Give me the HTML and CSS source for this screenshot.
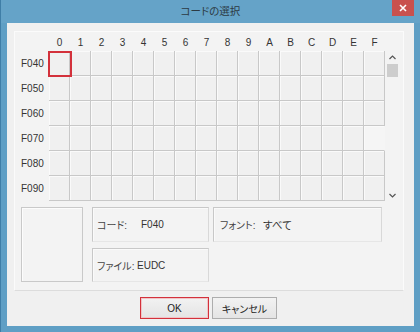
FILE: index.html
```html
<!DOCTYPE html>
<html lang="ja">
  <head>
    <meta charset="UTF-8" />
    <title>コードの選択</title>
    <link rel="stylesheet" href="styles.css">
  </head>
  <body>
    <div class="window">
      <!-- title bar -->
      <div class="titlebar">
        <div></div>
        <div class="title">コードの選択</div>
        <div class="btn-close">
          <svg width="8" height="8" viewBox="0 0 8 8"><path d="M1 1L7 7M7 1L1 7" stroke="#fff" stroke-width="1.6" /></svg>
        </div>
      </div>

      <div class="client">
        <div class="panel">
          <!-- code chart -->
          <div class="chart">
            <div class="corner"></div>
            <div class="hd">0</div><div class="hd">1</div><div class="hd">2</div><div class="hd">3</div>
            <div class="hd">4</div><div class="hd">5</div><div class="hd">6</div><div class="hd">7</div>
            <div class="hd">8</div><div class="hd">9</div><div class="hd">A</div><div class="hd">B</div>
            <div class="hd">C</div><div class="hd">D</div><div class="hd">E</div><div class="hd">F</div>
            <div class="hd"></div>

            <div class="rl">F040</div>
            <div class="cell sel"></div><div class="cell"></div><div class="cell"></div><div class="cell"></div>
            <div class="cell"></div><div class="cell"></div><div class="cell"></div><div class="cell"></div>
            <div class="cell"></div><div class="cell"></div><div class="cell"></div><div class="cell"></div>
            <div class="cell"></div><div class="cell"></div><div class="cell"></div><div class="cell"></div>
            <div class="scroll">
              <div class="arrow">
                <svg width="7" height="5" viewBox="0 0 7 5"><path d="M0.5 4L3.5 1L6.5 4" fill="none" stroke="#555" stroke-width="1.2" /></svg>
              </div>
              <div class="thumb"></div>
              <div class="track"></div>
              <div class="arrow">
                <svg width="7" height="5" viewBox="0 0 7 5"><path d="M0.5 1L3.5 4L6.5 1" fill="none" stroke="#555" stroke-width="1.2" /></svg>
              </div>
            </div>

            <div class="rl">F050</div>
            <div class="cell"></div><div class="cell"></div><div class="cell"></div><div class="cell"></div>
            <div class="cell"></div><div class="cell"></div><div class="cell"></div><div class="cell"></div>
            <div class="cell"></div><div class="cell"></div><div class="cell"></div><div class="cell"></div>
            <div class="cell"></div><div class="cell"></div><div class="cell"></div><div class="cell"></div>

            <div class="rl">F060</div>
            <div class="cell"></div><div class="cell"></div><div class="cell"></div><div class="cell"></div>
            <div class="cell"></div><div class="cell"></div><div class="cell"></div><div class="cell"></div>
            <div class="cell"></div><div class="cell"></div><div class="cell"></div><div class="cell"></div>
            <div class="cell"></div><div class="cell"></div><div class="cell"></div><div class="cell"></div>

            <div class="rl">F070</div>
            <div class="cell"></div><div class="cell"></div><div class="cell"></div><div class="cell"></div>
            <div class="cell"></div><div class="cell"></div><div class="cell"></div><div class="cell"></div>
            <div class="cell"></div><div class="cell"></div><div class="cell"></div><div class="cell"></div>
            <div class="cell"></div><div class="cell"></div><div class="cell"></div><div class="cell blank"></div>

            <div class="rl">F080</div>
            <div class="cell"></div><div class="cell"></div><div class="cell"></div><div class="cell"></div>
            <div class="cell"></div><div class="cell"></div><div class="cell"></div><div class="cell"></div>
            <div class="cell"></div><div class="cell"></div><div class="cell"></div><div class="cell"></div>
            <div class="cell"></div><div class="cell"></div><div class="cell"></div><div class="cell"></div>

            <div class="rl">F090</div>
            <div class="cell"></div><div class="cell"></div><div class="cell"></div><div class="cell"></div>
            <div class="cell"></div><div class="cell"></div><div class="cell"></div><div class="cell"></div>
            <div class="cell"></div><div class="cell"></div><div class="cell"></div><div class="cell"></div>
            <div class="cell"></div><div class="cell"></div><div class="cell"></div><div class="cell"></div>
          </div>

          <!-- info -->
          <div class="info">
            <div class="preview"></div>
            <div class="info-col">
              <div class="box box-code">
                <span class="lbl lbl-code">コード:</span>
                <span class="val">F040</span>
              </div>
              <div class="box box-file">
                <span class="lbl lbl-file">ファイル:</span>
                <span class="val">EUDC</span>
              </div>
            </div>
            <div class="box box-font">
              <span class="lbl lbl-font">フォント:</span>
              <span class="val val-jp">すべて</span>
            </div>
          </div>
        </div>

        <div class="buttons">
          <button class="btn btn-ok">OK</button>
          <button class="btn">キャンセル</button>
        </div>
      </div>
    </div>
  </body>
</html>
```

FILE: styles.css
```css
* {
    margin: 0;
    padding: 0;
    box-sizing: border-box;
}

body {
    width: 420px;
    height: 332px;
    overflow: hidden;
    font-family: "Liberation Sans", "Noto Sans CJK JP", sans-serif;
    font-feature-settings: "palt";
    color: #222;
}

.window {
    width: 420px;
    height: 332px;
    display: flex;
    flex-direction: column;
    background-color: #5f9fc5;
    border-left: 1px solid #3f7ea7;
}

/* title bar */

.titlebar {
    height: 23px;
    display: grid;
    grid-template-columns: 1fr auto 1fr;
    background-color: #65a3c8;
}

.title {
    padding-top: 4px;
    font-size: 10.5px;
    line-height: 15px;
    color: #2c3a44;
}

.btn-close {
    justify-self: end;
    width: 22px;
    height: 16px;
    margin-right: 6px;
    background-color: #c9514e;
    display: flex;
    align-items: center;
    justify-content: center;
}

.client {
    flex: 1;
    margin: 0 6px 6px 6px;
    padding: 8px 10px 0 7px;
    background-color: #f0f0f0;
}

.panel {
    width: 390px;
    background-color: #f3f3f3;
    border: 1px solid #fbfbfb;
    border-bottom-color: #dcdcdc;
    padding: 0 0 8px 0;
}

/* chart */

.chart {
    display: grid;
    grid-template-columns: 34px repeat(16, 21px) 13px;
    grid-template-rows: 19px repeat(6, 25px);
}

.hd {
    padding-top: 4px;
    font-size: 10px;
    line-height: 14px;
    text-align: center;
    color: #333;
}

.rl {
    padding-left: 6px;
    font-size: 10px;
    line-height: 25px;
    color: #333;
}

.cell {
    position: relative;
    border-right: 1px solid #c8c8c8;
    border-bottom: 1px solid #c8c8c8;
    background-color: #f0f0f0;
    box-shadow: inset 1px 1px 0 #fafafa;
}

.cell.blank {
    border-right-color: transparent;
    background-color: #f5f5f5;
}

.cell.sel {
    z-index: 1;
}

.cell.sel::after {
    content: "";
    position: absolute;
    left: -1px;
    top: 0;
    width: 20px;
    height: 22px;
    border: 2px solid #d3313b;
}

.scroll {
    grid-column: 18;
    grid-row: 2 / 8;
    padding-left: 2px;
    display: flex;
    flex-direction: column;
}

.arrow {
    height: 12px;
    display: flex;
    align-items: center;
    justify-content: center;
}

.thumb {
    height: 13px;
    margin-top: 1px;
    background-color: #cdcdcd;
}

.track {
    flex: 1;
}

/* info boxes */

.info {
    display: flex;
    margin-top: 6px;
    padding-left: 6px;
}

.preview {
    width: 62px;
    height: 75px;
    border: 1px solid #c9c9c9;
    box-shadow: inset 1px 1px 0 #fcfcfc;
    margin-right: 9px;
}

.info-col {
    display: flex;
    flex-direction: column;
    gap: 6px;
    margin-right: 4px;
}

.box {
    display: flex;
    align-items: center;
    padding-left: 4px;
    border: 1px solid #c8c8c8;
    border-right-color: #d8d8d8;
    border-bottom-color: #e6e6e6;
    box-shadow: inset 1px 1px 0 #fafafa;
}

.box-code {
    width: 117px;
    height: 35px;
}

.box-file {
    width: 117px;
    height: 34px;
}

.box-font {
    width: 169px;
    height: 35px;
    padding-left: 6px;
}

.lbl {
    font-size: 10px;
    color: #444;
}

.lbl-code {
    width: 44px;
}

.lbl-file {
    width: 40px;
}

.lbl-font {
    width: 43px;
}

.val {
    font-size: 10px;
    color: #333;
}

.val-jp {
    font-size: 10.5px;
}

/* buttons */

.buttons {
    display: flex;
    gap: 3px;
    margin-top: 6px;
    padding-left: 126px;
}

.btn {
    width: 65px;
    height: 22px;
    font-family: "Liberation Sans", "Noto Sans CJK JP", sans-serif;
    font-feature-settings: "palt";
    font-size: 10px;
    color: #222;
    background: linear-gradient(#f2f2f2, #e4e4e4);
    border: 1px solid #adadad;
}

.btn-ok {
    width: 69px;
    border-color: #d3313b;
    box-shadow: inset 0 0 0 1px #f0c4c7;
}
```
